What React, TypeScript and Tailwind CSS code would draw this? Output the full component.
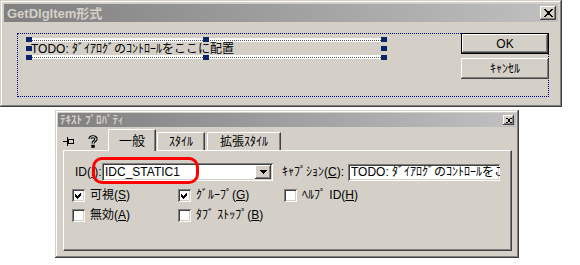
import * as React from 'react';

const raisedFrame =
    'shadow-[inset_-1px_-1px_0_#404040,inset_1px_1px_0_#d4d0c8,inset_-2px_-2px_0_#808080,inset_2px_2px_0_#ffffff]';
const raisedBtn = 'shadow-[inset_-1px_-1px_0_#404040,inset_1px_1px_0_#ffffff,inset_-2px_-2px_0_#808080]';
const sunken =
    'shadow-[inset_1px_1px_0_#808080,inset_-1px_-1px_0_#ffffff,inset_2px_2px_0_#404040,inset_-2px_-2px_0_#d4d0c8]';

function CloseGlyph({ size }: { size: number }) {
    return (
        <svg width={size} height={size - 1} viewBox="0 0 8 7" shapeRendering="crispEdges">
            <path d="M0 0h2v1h-2zM6 0h2v1h-2zM1 1h2v1h-2zM5 1h2v1h-2zM2 2h4v1h-4zM3 3h2v1h-2zM2 4h4v1h-4zM1 5h2v1h-2zM5 5h2v1h-2zM0 6h2v1h-2zM6 6h2v1h-2z" fill="#000" />
        </svg>
    );
}

function Handle({ className }: { className: string }) {
    return <span className={`absolute w-[6px] h-[5px] bg-[#0a246a] ${className}`} />;
}

function DottedBand() {
    return (
        <div className="h-[4px] bg-white flex items-center">
            <div className="w-full border-t border-dotted border-[#555]" />
        </div>
    );
}

function Check({ checked, children }: { checked?: boolean; children: React.ReactNode }) {
    return (
        <div className="w-[106px] h-[13px] flex items-center gap-[5px] leading-[13px]">
            <span className={`w-[13px] h-[13px] bg-white flex items-center justify-center shrink-0 ${sunken}`}>
                {checked && (
                    <svg width="7" height="7" viewBox="0 0 7 7" shapeRendering="crispEdges">
                        <path d="M6 0v3l-4 4-2-2v-3l2 2z" fill="#000" />
                    </svg>
                )}
            </span>
            <span>{children}</span>
        </div>
    );
}

export default function App() {
    return (
        <div
            className="w-[580px] h-[265px] bg-white overflow-hidden text-[12px] text-black"
            style={{ fontFamily: '"Liberation Sans", "Noto Sans CJK JP", sans-serif' }}
        >
            {/* Dialog being edited */}
            <div className={`w-[562px] h-[107px] bg-[#d4d0c8] p-[4px] flex flex-col ${raisedFrame}`}>
                <div className="h-[18px] flex items-center justify-between pl-[3px] pr-[2px] bg-gradient-to-r from-[#808080] to-[#c0c0c0]">
                    <span className="font-bold text-[13px] text-[#d4d0c8] leading-none">GetDlgItem形式</span>
                    <span className={`w-[16px] h-[14px] bg-[#d4d0c8] flex items-center justify-center ${raisedBtn}`}>
                        <CloseGlyph size={9} />
                    </span>
                </div>
                <div className="ml-[13px] mt-[11px] w-[532px] h-[64px] border border-dotted border-[#000080] flex justify-between">
                    <div className="relative ml-[8px] mt-[4px] w-[361px] h-[21px] flex flex-col">
                        <DottedBand />
                        <div className="flex-1 flex items-center pl-[5px] leading-none whitespace-nowrap">
                            TODO: ﾀﾞｲｱﾛｸﾞのｺﾝﾄﾛｰﾙをここに配置
                        </div>
                        <DottedBand />
                        <Handle className="left-0 top-[-1px]" />
                        <Handle className="left-0 top-[8px]" />
                        <Handle className="left-0 bottom-[-1px]" />
                        <Handle className="left-[177px] top-[-1px]" />
                        <Handle className="left-[177px] bottom-[-1px]" />
                        <Handle className="right-0 top-[-1px]" />
                        <Handle className="right-0 top-[8px]" />
                        <Handle className="right-0 bottom-[-1px]" />
                    </div>
                    <div className="-mt-px -mr-px flex flex-col gap-[4px]">
                        <div className="w-[88px] h-[21px] border border-black">
                            <div className={`w-full h-full flex items-center justify-center ${raisedBtn}`}>OK</div>
                        </div>
                        <div className={`w-[88px] h-[21px] flex items-center justify-center ${raisedBtn}`}>ｷｬﾝｾﾙ</div>
                    </div>
                </div>
            </div>

            {/* Property sheet */}
            <div className={`ml-[55px] mt-[3px] w-[464px] h-[148px] bg-[#d4d0c8] p-[3px] flex flex-col ${raisedFrame}`}>
                <div className="h-[14px] flex items-center justify-between pl-[2px] pr-[2px] bg-gradient-to-r from-[#808080] to-[#c0c0c0]">
                    <span className="font-bold text-[11px] text-[#d4d0c8] leading-none">ﾃｷｽﾄ ﾌﾟﾛﾊﾟﾃｨ</span>
                    <span className={`w-[11px] h-[10px] bg-[#d4d0c8] flex items-center justify-center ${raisedBtn}`}>
                        <CloseGlyph size={6} />
                    </span>
                </div>

                <div className="ml-[5px] mt-[2px] h-[21px] flex items-end">
                    <div className="w-[45px] h-[21px] flex items-center gap-[13px] pt-[3px]">
                        <svg width="12" height="9" viewBox="0 0 12 9" shapeRendering="crispEdges">
                            <path d="M0 4h4v1h-4z M4 0h1v9h-1z M5 2h6v1h-6z M5 6h6v1h-6z M10 2h1v5h-1z M5 3h1v3h-1z" fill="#000" />
                        </svg>
                        <svg width="10" height="13" viewBox="0 0 10 13">
                            <path d="M2 4 C2 1 8 1 8 4 C8 6 5 6 5 8.5" stroke="#000" strokeWidth="3.2" fill="none" />
                            <path d="M2 4 C2 1 8 1 8 4 C8 6 5 6 5 8.5" stroke="#fff" strokeWidth="1" fill="none" />
                            <rect x="3.3" y="9.8" width="3.4" height="3" fill="#000" />
                        </svg>
                    </div>
                    <div className="relative z-10 -mb-px w-[48px] h-[22px] bg-[#d4d0c8] border-l border-t border-white border-r border-r-[#404040] rounded-tl-[2px] shadow-[inset_-1px_0_0_#808080] flex items-center justify-center text-[13px]">
                        一般
                    </div>
                    <div className="ml-px w-[48px] h-[18px] border-l border-t border-white border-r border-r-[#404040] rounded-tl-[2px] shadow-[inset_-1px_0_0_#808080] flex items-center justify-center">
                        ｽﾀｲﾙ
                    </div>
                    <div className="ml-[2px] w-[74px] h-[18px] border-l border-t border-white border-r border-r-[#404040] rounded-tl-[2px] shadow-[inset_-1px_0_0_#808080] flex items-center justify-center">
                        拡張ｽﾀｲﾙ
                    </div>
                </div>

                <div className="relative ml-[5px] w-[449px] h-[101px] border-l border-t border-white border-r border-b border-r-[#404040] border-b-[#404040] shadow-[inset_-1px_-1px_0_#808080] px-[8px] pt-[12px]">
                    <div className="ml-[3px] flex items-center">
                        <span className="w-[27px] whitespace-nowrap">
                            ID(<u>I</u>):
                        </span>
                        <div className={`w-[171px] h-[18px] bg-white flex items-center justify-between p-[2px] ${sunken}`}>
                            <span className="pl-[1px] leading-none">IDC_STATIC1</span>
                            <span className={`w-[16px] h-[14px] bg-[#d4d0c8] flex items-center justify-center ${raisedBtn}`}>
                                <svg width="7" height="4" viewBox="0 0 7 4" shapeRendering="crispEdges">
                                    <path d="M0 0h7v1h-1v1h-1v1h-1v1h-1v-1h-1v-1h-1v-1h-1z" fill="#000" />
                                </svg>
                            </span>
                        </div>
                        <span className="ml-[9px] w-[66px] whitespace-nowrap">
                            ｷｬﾌﾟｼｮﾝ(<u>C</u>):
                        </span>
                        <div className={`w-[152px] h-[17px] bg-white flex items-center px-[3px] overflow-hidden whitespace-nowrap leading-none ${sunken}`}>
                            TODO: ﾀﾞｲｱﾛｸﾞのｺﾝﾄﾛｰﾙをこ
                        </div>
                    </div>
                    <div className="mt-[8px] flex">
                        <Check checked>
                            可視(<u>S</u>)
                        </Check>
                        <Check checked>
                            ｸﾞﾙｰﾌﾟ(<u>G</u>)
                        </Check>
                        <Check>
                            ﾍﾙﾌﾟ ID(<u>H</u>)
                        </Check>
                    </div>
                    <div className="mt-[7px] flex">
                        <Check>
                            無効(<u>A</u>)
                        </Check>
                        <Check>
                            ﾀﾌﾞ ｽﾄｯﾌﾟ(<u>B</u>)
                        </Check>
                    </div>
                    {/* red annotation ring */}
                    <div className="absolute left-[28px] top-[6px] w-[107px] h-[27px] border-[3px] border-[#ff0000] rounded-[10px]" />
                </div>
            </div>
        </div>
    );
}
